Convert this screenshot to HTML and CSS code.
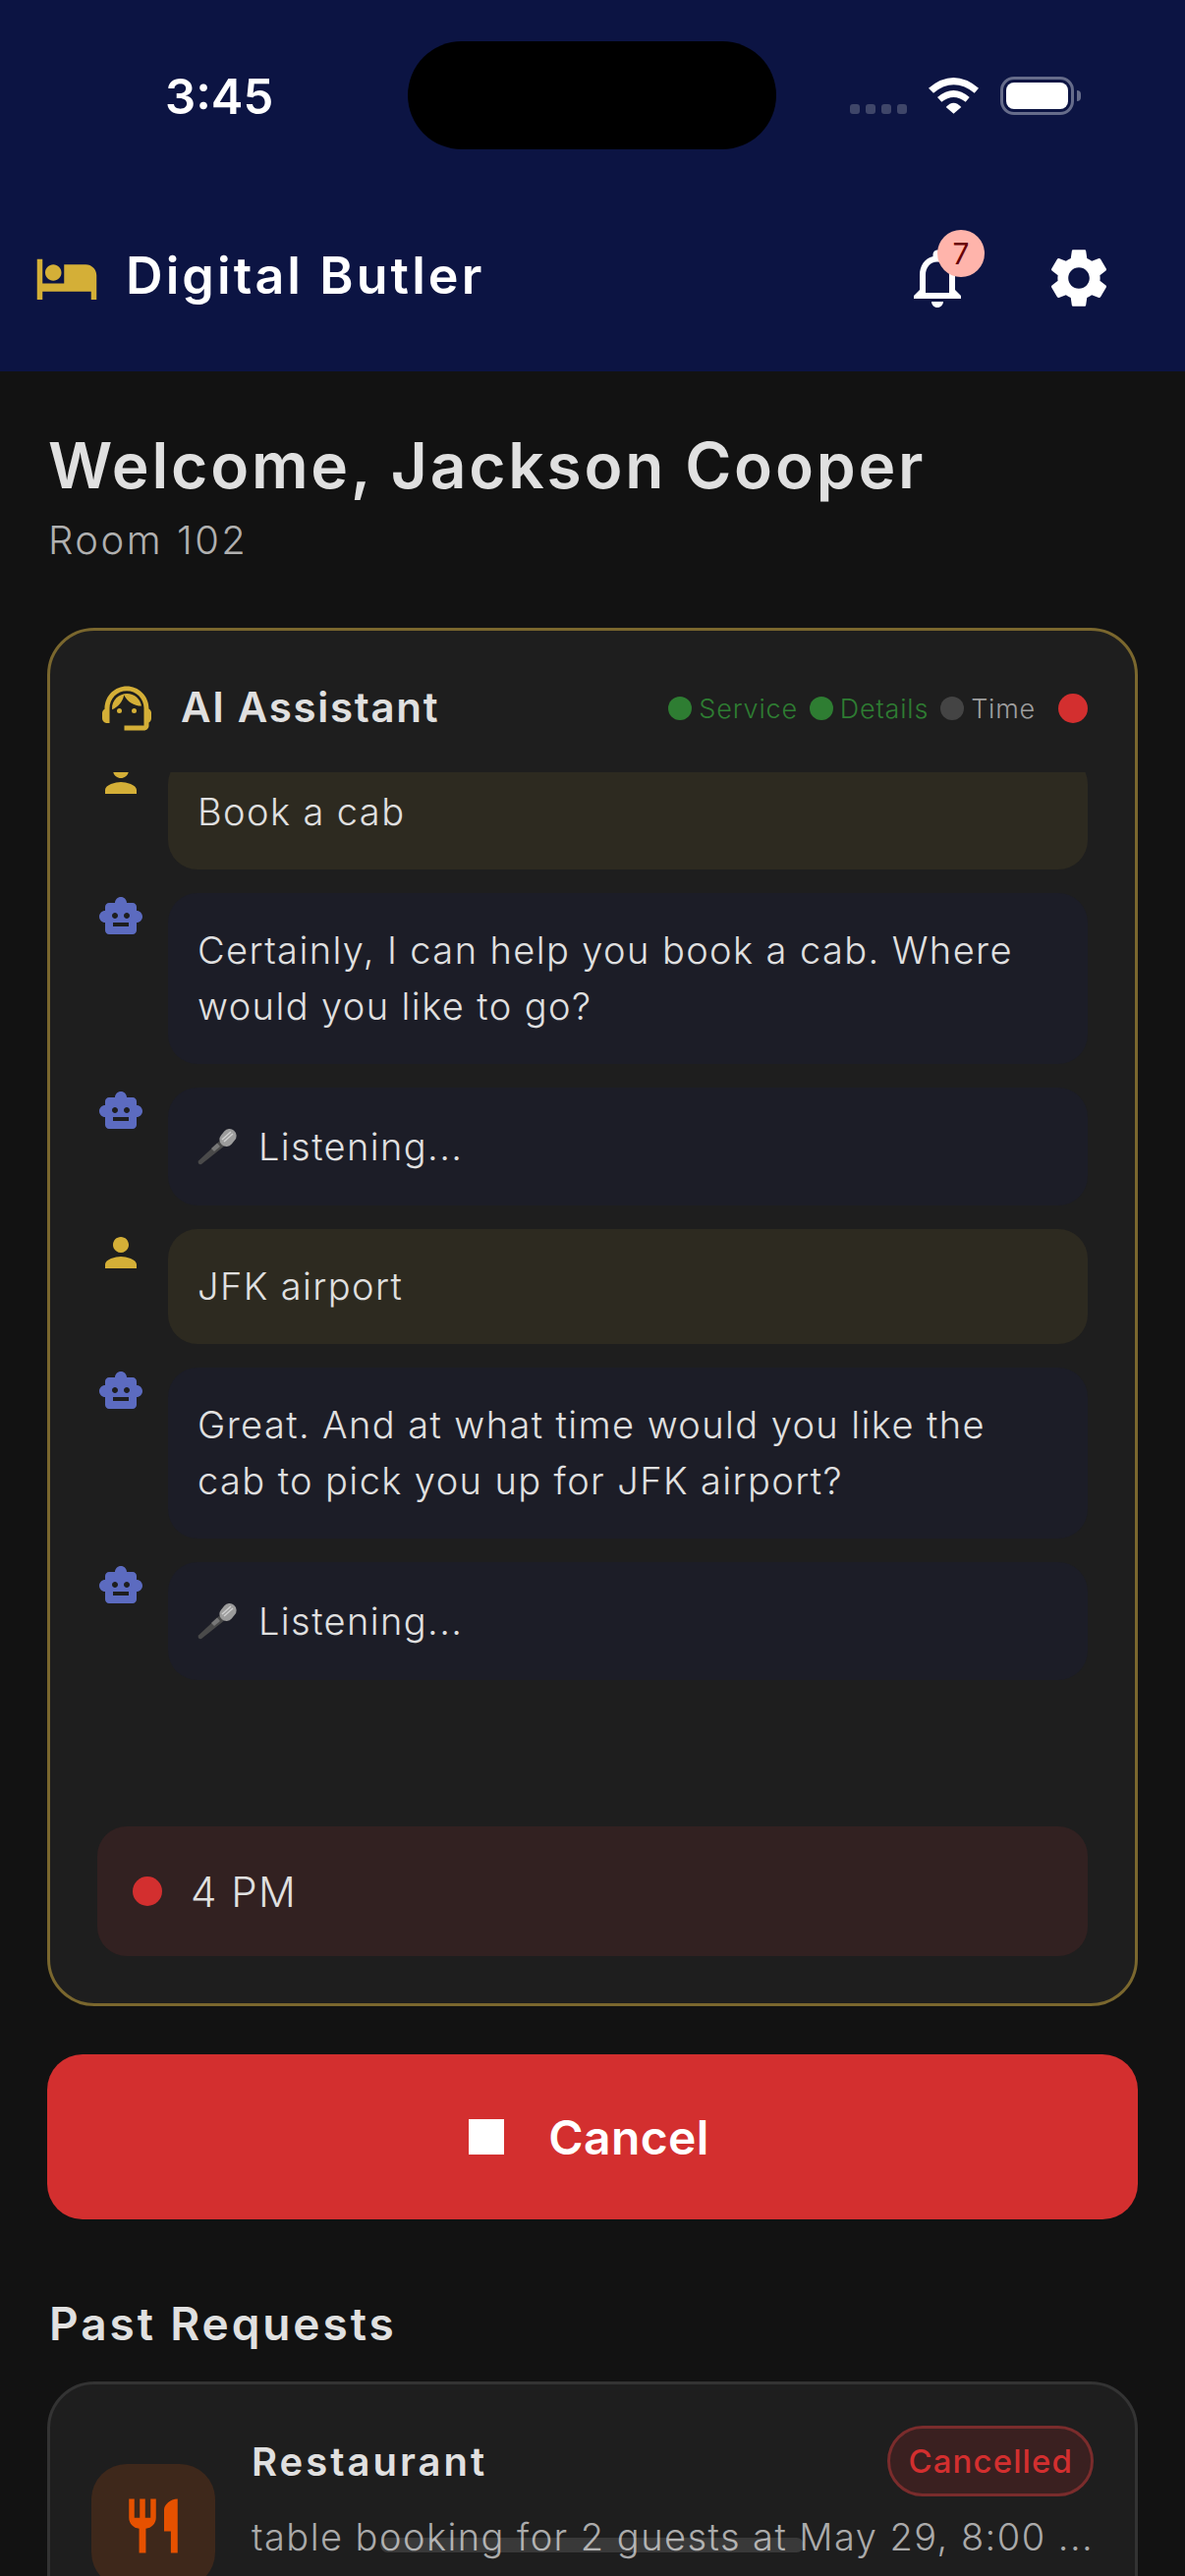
FILE: index.html
```html
<!DOCTYPE html>
<html lang="en">

<head>
    <meta charset="UTF-8">
    <meta name="viewport" content="width=device-width, initial-scale=1.0">
    <title>Digital Butler</title>
    <link rel="stylesheet" href="styles.css">
</head>

<body>
    <div class="screen">
        <!-- status bar + app bar -->
        <header class="top">
            <div class="status">
                <span class="clock">3:45</span>
                <div class="island"></div>
                <div class="status-icons">
                    <div class="signal"><i></i><i></i><i></i><i></i></div>
                    <svg class="wifi" viewBox="0 0 51 37" fill="#fff">
                        <path d="M0 10.7Q25.5-10.7 51 10.7L46.7 15.7Q25.5-1.1 5 15.7Z" />
                        <path d="M9 20Q25.5 6 41.7 20L37.7 24.7Q25.5 15.3 13.3 24.7Z" />
                        <path d="M17.7 30Q25.5 21.3 33.3 30L25.5 36.7Z" />
                    </svg>
                    <div class="battery"><div class="battery-fill"></div></div>
                    <div class="battery-tip"></div>
                </div>
            </div>
            <div class="appbar">
                <svg class="bed-icon" viewBox="0 0 24 24">
                    <path d="M7 13c1.66 0 3-1.34 3-3S8.66 7 7 7s-3 1.34-3 3 1.34 3 3 3zm12-6h-8v7H3V5H1v15h2v-3h18v3h2v-9c0-2.21-1.79-4-4-4z" />
                </svg>
                <span class="app-title">Digital Butler</span>
                <div class="bell">
                    <svg class="bar-icon" viewBox="0 0 24 24">
                        <path d="M12 22c1.1 0 2-.9 2-2h-4c0 1.1.89 2 2 2zm6-6v-5c0-3.07-1.64-5.64-4.5-6.32V4c0-.83-.67-1.5-1.5-1.5s-1.5.67-1.5 1.5v.68C7.63 5.36 6 7.92 6 11v5l-2 2v1h16v-1l-2-2zm-2 1H8v-6c0-2.48 1.51-4.5 4-4.5s4 2.02 4 4.5v6z" />
                    </svg>
                    <span class="bell-badge">7</span>
                </div>
                <svg class="bar-icon" viewBox="0 0 24 24">
                    <path d="M19.14 12.94c.04-.3.06-.61.06-.94 0-.32-.02-.64-.07-.94l2.03-1.58c.18-.14.23-.41.12-.61l-1.92-3.32c-.12-.22-.37-.29-.59-.22l-2.39.96c-.5-.38-1.03-.7-1.62-.94l-.36-2.54c-.04-.24-.24-.41-.48-.41h-3.84c-.24 0-.43.17-.47.41l-.36 2.54c-.59.24-1.13.57-1.62.94l-2.39-.96c-.22-.08-.47 0-.59.22L2.74 8.87c-.12.21-.08.47.12.61l2.03 1.58c-.05.3-.09.63-.09.94s.02.64.07.94l-2.03 1.58c-.18.14-.23.41-.12.61l1.92 3.32c.12.22.37.29.59.22l2.39-.96c.5.38 1.03.7 1.62.94l.36 2.54c.05.24.24.41.48.41h3.84c.24 0 .44-.17.47-.41l.36-2.54c.59-.24 1.13-.56 1.62-.94l2.39.96c.22.08.47 0 .59-.22l1.92-3.32c.12-.22.07-.47-.12-.61l-2.01-1.58zM12 15.6c-1.98 0-3.6-1.62-3.6-3.6s1.62-3.6 3.6-3.6 3.6 1.62 3.6 3.6-1.62 3.6-3.6 3.6z" />
                </svg>
            </div>
        </header>

        <main class="content">
            <h1 class="welcome">Welcome, Jackson Cooper</h1>
            <p class="room">Room 102</p>

            <!-- assistant card -->
            <section class="assistant">
                <div class="assistant-head">
                    <svg class="agent-icon" viewBox="0 0 24 24">
                        <path d="M21 12.22C21 6.73 16.74 3 12 3c-4.69 0-9 3.65-9 9.28-.6.34-1 .98-1 1.72v2c0 1.1.9 2 2 2h1v-6.1c0-3.87 3.13-7 7-7s7 3.13 7 7V19h-8v2h8c1.1 0 2-.9 2-2v-1.22c.59-.31 1-.92 1-1.64v-2.3c0-.7-.41-1.31-1-1.62z" />
                        <circle cx="9" cy="13" r="1" />
                        <circle cx="15" cy="13" r="1" />
                        <path d="M18 11.03C17.52 8.18 15.04 6 12.05 6c-3.03 0-6.29 2.51-6.03 6.45 2.47-1.01 4.33-3.21 4.86-5.89 1.31 2.63 4 4.44 7.12 4.47z" />
                    </svg>
                    <span class="assistant-title">AI Assistant</span>
                    <div class="steps">
                        <span class="step done"><i></i>Service</span>
                        <span class="step done"><i></i>Details</span>
                        <span class="step"><i></i>Time</span>
                    </div>
                    <span class="rec-dot"></span>
                </div>

                <div class="chat">
                    <div class="chat-inner">
                        <div class="msg">
                            <svg class="msg-icon user" viewBox="0 0 24 24"><path d="M12 12c2.21 0 4-1.79 4-4s-1.79-4-4-4-4 1.79-4 4 1.79 4 4 4zm0 2c-2.67 0-8 1.34-8 4v2h16v-2c0-2.66-5.33-4-8-4z" /></svg>
                            <div class="bubble from-user">Book a cab</div>
                        </div>
                        <div class="msg">
                            <svg class="msg-icon bot" viewBox="0 0 24 24"><path d="M20 9V7c0-1.1-.9-2-2-2h-3c0-1.66-1.34-3-3-3S9 3.34 9 5H6c-1.1 0-2 .9-2 2v2c-1.66 0-3 1.34-3 3s1.34 3 3 3v4c0 1.1.9 2 2 2h12c1.1 0 2-.9 2-2v-4c1.66 0 3-1.34 3-3s-1.34-3-3-3zM7.5 11.5c0-.83.67-1.5 1.5-1.5s1.5.67 1.5 1.5S9.83 13 9 13s-1.5-.67-1.5-1.5zM16 17H8v-2h8v2zm-1-4c-.83 0-1.5-.67-1.5-1.5S14.17 10 15 10s1.5.67 1.5 1.5S15.83 13 15 13z" /></svg>
                            <div class="bubble from-bot">Certainly, I can help you book a cab. Where would you like to go?</div>
                        </div>
                        <div class="msg">
                            <svg class="msg-icon bot" viewBox="0 0 24 24"><path d="M20 9V7c0-1.1-.9-2-2-2h-3c0-1.66-1.34-3-3-3S9 3.34 9 5H6c-1.1 0-2 .9-2 2v2c-1.66 0-3 1.34-3 3s1.34 3 3 3v4c0 1.1.9 2 2 2h12c1.1 0 2-.9 2-2v-4c1.66 0 3-1.34 3-3s-1.34-3-3-3zM7.5 11.5c0-.83.67-1.5 1.5-1.5s1.5.67 1.5 1.5S9.83 13 9 13s-1.5-.67-1.5-1.5zM16 17H8v-2h8v2zm-1-4c-.83 0-1.5-.67-1.5-1.5S14.17 10 15 10s1.5.67 1.5 1.5S15.83 13 15 13z" /></svg>
                            <div class="bubble from-bot listening">
                                <svg class="mic" viewBox="0 0 40 38">
                                    <path d="M1 33.500L24 12l4.500 5.500L4 37q-1.500.8-2.800-.4Q0 35 1 33.500z" fill="#4a4a4a" />
                                    <path d="M14 21l6-5.500 3 3.500-6 5z" fill="#777" />
                                    <rect x="24" y="0.500" width="14" height="19" rx="7" transform="rotate(40 31 10)" fill="#9c9c9c" />
                                    <path d="M25 12l9-8M27 14l9-8" stroke="#d0d0d0" stroke-width="1.500" />
                                </svg>
                                <span>Listening...</span>
                            </div>
                        </div>
                        <div class="msg">
                            <svg class="msg-icon user" viewBox="0 0 24 24"><path d="M12 12c2.21 0 4-1.79 4-4s-1.79-4-4-4-4 1.79-4 4 1.79 4 4 4zm0 2c-2.67 0-8 1.34-8 4v2h16v-2c0-2.66-5.33-4-8-4z" /></svg>
                            <div class="bubble from-user">JFK airport</div>
                        </div>
                        <div class="msg">
                            <svg class="msg-icon bot" viewBox="0 0 24 24"><path d="M20 9V7c0-1.1-.9-2-2-2h-3c0-1.66-1.34-3-3-3S9 3.34 9 5H6c-1.1 0-2 .9-2 2v2c-1.66 0-3 1.34-3 3s1.34 3 3 3v4c0 1.1.9 2 2 2h12c1.1 0 2-.9 2-2v-4c1.66 0 3-1.34 3-3s-1.34-3-3-3zM7.5 11.5c0-.83.67-1.5 1.5-1.5s1.5.67 1.5 1.5S9.83 13 9 13s-1.5-.67-1.5-1.5zM16 17H8v-2h8v2zm-1-4c-.83 0-1.5-.67-1.5-1.5S14.17 10 15 10s1.5.67 1.5 1.5S15.83 13 15 13z" /></svg>
                            <div class="bubble from-bot">Great. And at what time would you like the cab to pick you up for JFK airport?</div>
                        </div>
                        <div class="msg">
                            <svg class="msg-icon bot" viewBox="0 0 24 24"><path d="M20 9V7c0-1.1-.9-2-2-2h-3c0-1.66-1.34-3-3-3S9 3.34 9 5H6c-1.1 0-2 .9-2 2v2c-1.66 0-3 1.34-3 3s1.34 3 3 3v4c0 1.1.9 2 2 2h12c1.1 0 2-.9 2-2v-4c1.66 0 3-1.34 3-3s-1.34-3-3-3zM7.5 11.5c0-.83.67-1.5 1.5-1.5s1.5.67 1.5 1.5S9.83 13 9 13s-1.5-.67-1.5-1.5zM16 17H8v-2h8v2zm-1-4c-.83 0-1.5-.67-1.5-1.5S14.17 10 15 10s1.5.67 1.5 1.5S15.83 13 15 13z" /></svg>
                            <div class="bubble from-bot listening">
                                <svg class="mic" viewBox="0 0 40 38">
                                    <path d="M1 33.500L24 12l4.500 5.500L4 37q-1.500.8-2.800-.4Q0 35 1 33.500z" fill="#4a4a4a" />
                                    <path d="M14 21l6-5.500 3 3.500-6 5z" fill="#777" />
                                    <rect x="24" y="0.500" width="14" height="19" rx="7" transform="rotate(40 31 10)" fill="#9c9c9c" />
                                    <path d="M25 12l9-8M27 14l9-8" stroke="#d0d0d0" stroke-width="1.500" />
                                </svg>
                                <span>Listening...</span>
                            </div>
                        </div>
                    </div>
                </div>

                <div class="live-input">
                    <span class="live-dot"></span>
                    <span>4 PM</span>
                </div>
            </section>

            <button type="button" class="cancel-btn"><i class="stop-icon"></i>Cancel</button>

            <h2 class="past-title">Past Requests</h2>
            <article class="request">
                <div class="request-icon">
                    <svg viewBox="0 0 24 24"><path d="M11 9H9V2H7v7H5V2H3v7c0 2.12 1.66 3.84 3.750 3.970V22h2.500v-9.030C11.340 12.840 13 11.120 13 9V2h-2v7zm5-3v8h2.500v8H21V2c-2.760 0-5 2.240-5 4z" /></svg>
                </div>
                <div class="request-body">
                    <div class="request-top">
                        <span class="request-name">Restaurant</span>
                        <span class="status-pill">Cancelled</span>
                    </div>
                    <p class="request-desc">table booking for 2 guests at May 29, 8:00 ...</p>
                </div>
            </article>
        </main>

        <div class="home-bar"></div>
    </div>
</body>

</html>
```

FILE: styles.css
```css
* {
    margin: 0;
    padding: 0;
    box-sizing: border-box;
}

body {
    font-family: Inter, "Noto Sans", sans-serif;
    color: #e0e0e0;
    background: #121212;
}

.screen {
    position: relative;
    width: 1206px;
    height: 2622px;
    overflow: hidden;
    background: #121212;
}

/* top area */
.top {
    height: 378px;
    background: #0c1443;
    color: #fff;
}

.status {
    position: relative;
    height: 196px;
    padding-top: 70px;
    padding-left: 168px;
}

.clock {
    display: block;
    font-size: 49px;
    line-height: 58px;
    font-weight: 600;
}

.island {
    position: absolute;
    left: 415px;
    top: 42px;
    width: 375px;
    height: 110px;
    border-radius: 55px;
    background: #000;
}

.status-icons {
    position: absolute;
    left: 865px;
    top: 78px;
    display: flex;
    align-items: flex-start;
}

.signal {
    display: flex;
    gap: 6px;
    margin-top: 28px;
    margin-right: 22px;
}

.signal i {
    width: 10px;
    height: 10px;
    border-radius: 3px;
    background: #3f4669;
}

.wifi {
    width: 51px;
    height: 37px;
    margin-top: 1px;
    margin-right: 22px;
}

.battery {
    width: 75px;
    height: 39px;
    padding: 3px;
    border: 3px solid #666c8a;
    border-radius: 14px;
}

.battery-fill {
    width: 100%;
    height: 100%;
    background: #fff;
    border-radius: 8px;
}

.battery-tip {
    width: 4px;
    height: 11px;
    margin-top: 14px;
    margin-left: 3px;
    background: #666c8a;
    border-radius: 0 4px 4px 0;
}

.appbar {
    display: flex;
    align-items: center;
    height: 72px;
    margin-top: 51px;
    padding-left: 35px;
    padding-right: 72px;
}

.bed-icon {
    width: 66px;
    height: 66px;
    fill: #d4af37;
    margin-right: 27px;
}

.app-title {
    padding-bottom: 6px;
    font-size: 52px;
    font-weight: 600;
    letter-spacing: 3.1px;
    flex: 1;
}

.bell {
    position: relative;
    width: 72px;
    height: 72px;
    margin-right: 72px;
}

.bar-icon {
    display: block;
    width: 72px;
    height: 72px;
    fill: #fff;
}

.bell-badge {
    position: absolute;
    left: 36px;
    top: -13px;
    width: 48px;
    height: 48px;
    border-radius: 50%;
    background: #ffb4ab;
    color: #690005;
    font-size: 30px;
    line-height: 48px;
    text-align: center;
}

/* main content */
.content {
    padding: 0 48px;
}

.welcome {
    margin-top: 57px;
    padding-left: 1px;
    font-size: 64px;
    line-height: 78px;
    font-weight: 600;
    letter-spacing: 2.8px;
}

.room {
    margin-top: 10px;
    padding-left: 1px;
    font-size: 40px;
    line-height: 54px;
    font-weight: 300;
    letter-spacing: 2.5px;
    color: #b0b0b0;
}

.assistant {
    margin-top: 62px;
    height: 1403px;
    padding: 0 48px 48px;
    border: 3px solid #7a672e;
    border-radius: 48px;
    background: #1e1e1e;
    display: flex;
    flex-direction: column;
}

.assistant-head {
    display: flex;
    align-items: center;
    height: 144px;
    padding-top: 14px;
}

.agent-icon {
    width: 60px;
    height: 60px;
    fill: #d4af37;
    margin-right: 25px;
}

.assistant-title {
    padding-bottom: 3px;
    font-size: 42px;
    font-weight: 600;
    letter-spacing: 1.7px;
    flex: 1;
}

.steps {
    display: flex;
    gap: 12px;
}

.step {
    display: flex;
    align-items: center;
    gap: 7px;
    font-size: 27px;
    font-weight: 300;
    letter-spacing: 0.8px;
    color: #9e9e9e;
}

.step i {
    width: 24px;
    height: 24px;
    border-radius: 50%;
    background: #444;
}

.step.done {
    color: #2e7d32;
}

.step.done i {
    background: #2e7d32;
}

.rec-dot {
    width: 30px;
    height: 30px;
    margin-left: 23px;
    border-radius: 50%;
    background: #d32f2f;
}

.chat {
    flex: 1;
    overflow: hidden;
}

.chat-inner {
    margin-top: -18px;
    display: flex;
    flex-direction: column;
    gap: 24px;
}

.msg {
    display: flex;
    gap: 24px;
    align-items: flex-start;
}

.msg-icon {
    width: 48px;
    height: 48px;
    flex: none;
}

.msg-icon.user {
    fill: #d4af37;
}

.msg-icon.bot {
    fill: #5c6bc0;
}

.bubble {
    flex: 1;
    padding: 30px 30px;
    border-radius: 30px;
    font-size: 38px;
    line-height: 57px;
    font-weight: 300;
    letter-spacing: 1.4px;
}

.from-user {
    background: #2d2a20;
}

.from-bot {
    background: #1c1d27;
}

.listening {
    display: flex;
    align-items: center;
    gap: 22px;
    height: 120px;
}

.mic {
    width: 40px;
    height: 38px;
    flex: none;
}

.live-input {
    display: flex;
    align-items: center;
    gap: 29px;
    height: 132px;
    padding-left: 36px;
    border-radius: 30px;
    background: #322121;
    font-size: 42px;
    font-weight: 300;
    letter-spacing: 1.5px;
}

.live-dot {
    width: 30px;
    height: 30px;
    border-radius: 50%;
    background: #d32f2f;
}

.cancel-btn {
    display: flex;
    align-items: center;
    justify-content: center;
    gap: 45px;
    width: 100%;
    height: 168px;
    margin-top: 49px;
    padding-right: 7px;
    border: none;
    border-radius: 36px;
    background: #d32f2f;
    color: #fff;
    font-family: inherit;
    font-size: 48px;
    font-weight: 600;
    letter-spacing: 0.4px;
}

.stop-icon {
    width: 36px;
    height: 36px;
    background: #fff;
}

.past-title {
    margin-top: 78px;
    font-size: 46px;
    line-height: 56px;
    font-weight: 600;
    letter-spacing: 2.9px;
    padding-left: 2px;
}

.request {
    display: flex;
    align-items: flex-start;
    gap: 37px;
    height: 290px;
    margin-top: 31px;
    padding: 42px 42px 0;
    border: 3px solid #333;
    border-radius: 48px;
    background: #1e1e1e;
}

.request-icon {
    display: flex;
    align-items: center;
    justify-content: center;
    width: 126px;
    height: 126px;
    flex: none;
    margin-top: 39px;
    border-radius: 36px;
    background: #3e281b;
}

.request-icon svg {
    width: 66px;
    height: 66px;
    fill: #e65100;
}

.request-body {
    flex: 1;
    min-width: 0;
}

.request-top {
    display: flex;
    justify-content: space-between;
    align-items: center;
}

.request-name {
    font-size: 40px;
    font-weight: 600;
    letter-spacing: 3px;
}

.status-pill {
    padding: 0 18px;
    height: 72px;
    line-height: 66px;
    border: 3px solid #7a2c2c;
    border-radius: 36px;
    background: #3a2020;
    color: #d32f2f;
    font-size: 33px;
    font-weight: 500;
    letter-spacing: 1.1px;
}

.request-desc {
    margin-top: 14px;
    font-size: 38px;
    line-height: 54px;
    font-weight: 300;
    letter-spacing: 1.45px;
    color: #aaa;
    white-space: nowrap;
}

.home-bar {
    position: absolute;
    left: 387px;
    top: 2583px;
    width: 431px;
    height: 15px;
    border-radius: 8px;
    background: rgba(255, 255, 255, 0.12);
}
```
